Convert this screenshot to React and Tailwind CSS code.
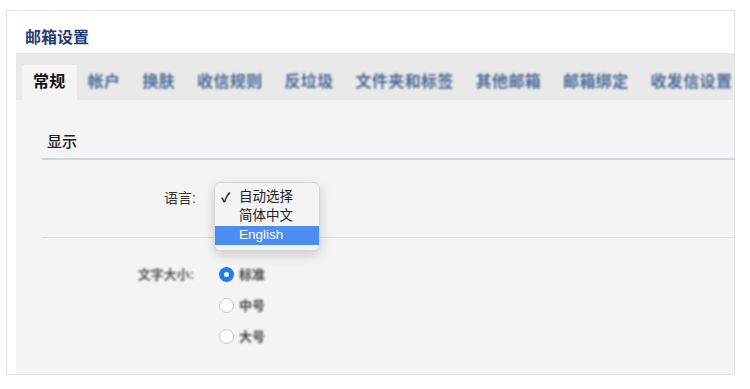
import React from "react";

const FONT = { fontFamily: '"Liberation Sans","Noto Sans CJK SC",sans-serif' };

const tabs = ["帐户", "换肤", "收信规则", "反垃圾", "文件夹和标签", "其他邮箱", "邮箱绑定", "收发信设置"];

function Radio({ checked, label }) {
  return (
    <div className="flex h-[31px] items-center">
      {checked ? (
        <span className="flex h-[15px] w-[15px] items-center justify-center rounded-full bg-[#1f7cf4] blur-[0.6px]">
          <span className="h-[5px] w-[5px] rounded-full bg-white" />
        </span>
      ) : (
        <span className="h-[15px] w-[15px] rounded-full border border-[#c4c4c4] bg-white blur-[0.6px]" />
      )}
      <span className="ml-[5px] text-[13px] font-bold text-[#444] blur-[0.8px]">{label}</span>
    </div>
  );
}

export default function App() {
  return (
    <div className="h-[389px] w-[750px] overflow-hidden bg-white pl-[6px] pt-[10px]" style={FONT}>
      <div className="flex h-[365px] w-[729px] flex-col border border-[#e2e2e2] bg-white">
        <div className="flex h-[42px] items-end pb-[7px] pl-[18px]">
          <span className="text-[16px] font-bold leading-none text-[#1f3c70]">邮箱设置</span>
        </div>
        <div className="ml-[9px] flex min-w-0 flex-1 flex-col">
          {/* tab bar */}
          <div className="flex h-[47px] items-end overflow-hidden bg-[#e9e9e9] pl-[6px]">
            <div className="flex h-[35px] shrink-0 items-center bg-[#f4f4f4] px-[11px] pb-[2px]">
              <span className="whitespace-nowrap text-[16px] font-bold tracking-[0.35px] text-[#111]">常规</span>
            </div>
            {tabs.map((t, i) => (
              <div
                key={t}
                className={
                  i === tabs.length - 1
                    ? "flex h-[35px] shrink-0 items-center pb-[2px] pl-[11px]"
                    : "flex h-[35px] shrink-0 items-center px-[11px] pb-[2px]"
                }
              >
                <span className="whitespace-nowrap text-[16px] font-bold tracking-[0.35px] text-[#4a6897] blur-[1px]">
                  {t}
                </span>
              </div>
            ))}
          </div>
          {/* content */}
          <div className="flex flex-1 flex-col bg-[#f4f4f4] pl-[26px]">
            <div className="flex h-[60px] items-end border-b-2 border-[#cfd5e1] pb-[9px] pl-[5px]">
              <span className="text-[15px] font-medium leading-none text-[#222]">显示</span>
            </div>
            <div className="relative flex h-[78px] items-center border-b border-[#dedede]">
              <span className="w-[154px] text-right text-[14px] text-[#333]">语言:</span>
              <div className="absolute left-[172px] top-[22px] w-[106px] rounded-[6px] border border-[#d6d6d6] bg-[#f3f3f3] py-[5px] shadow-[0_4px_12px_rgba(0,0,0,0.18)]">
                <div className="flex h-[19px] items-center text-[13.5px] text-[#222]">
                  <span className="w-[24px] pl-[6px] text-[13px] font-bold">✓</span>
                  <span>自动选择</span>
                </div>
                <div className="flex h-[19px] items-center text-[13.5px] text-[#222]">
                  <span className="w-[24px]" />
                  <span>简体中文</span>
                </div>
                <div className="flex h-[19px] items-center bg-[#4b8df1] text-[13.5px] text-white">
                  <span className="w-[24px]" />
                  <span>English</span>
                </div>
              </div>
            </div>
            <div className="flex pt-[21px]">
              <div className="flex h-[31px] w-[152px] items-center justify-end">
                <span className="text-[13px] font-bold text-[#555] blur-[0.8px]">文字大小:</span>
              </div>
              <div className="ml-[25px] flex flex-col">
                <Radio checked label="标准" />
                <Radio label="中号" />
                <Radio label="大号" />
              </div>
            </div>
          </div>
        </div>
      </div>
    </div>
  );
}
